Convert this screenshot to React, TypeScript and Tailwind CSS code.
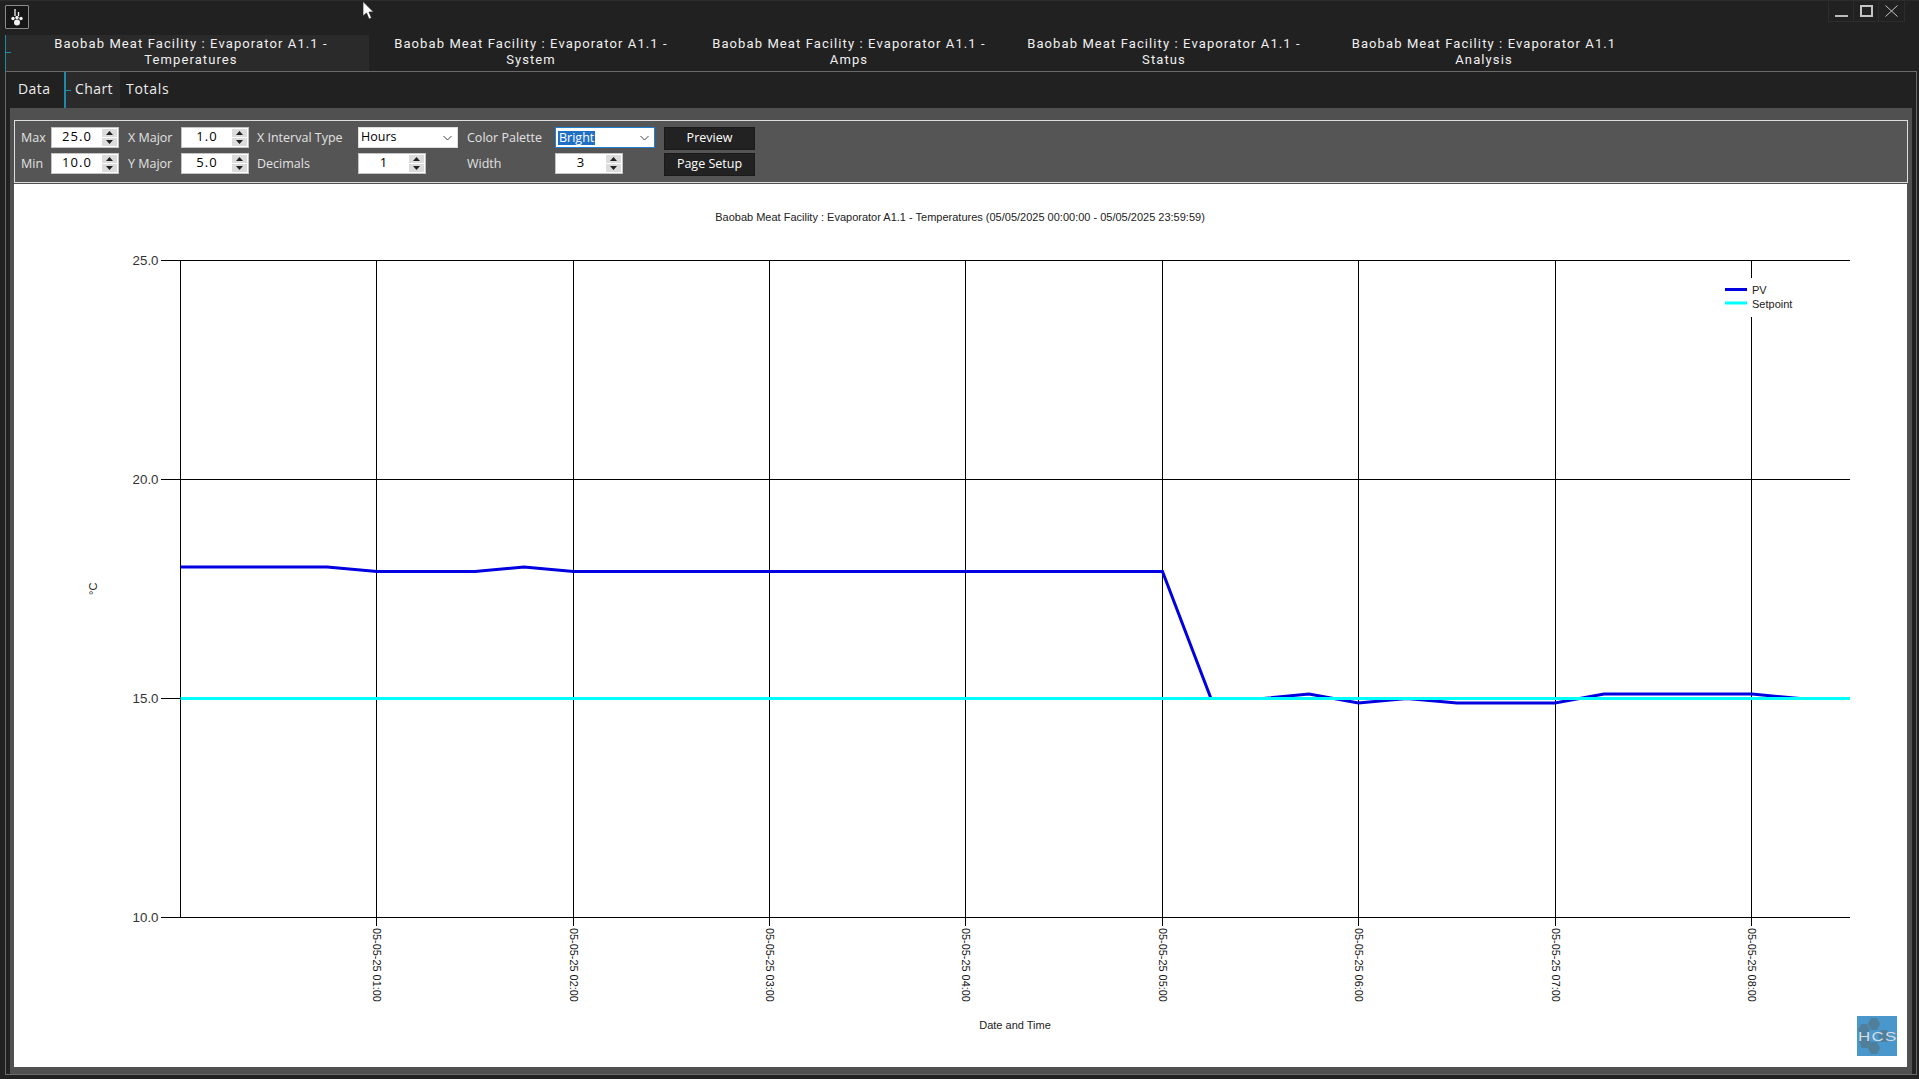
import React from "react";

const F = "font-['Open_Sans',sans-serif]";

function Arrow({ up }: { up: boolean }) {
  return (
    <svg width="7" height="4" viewBox="0 0 7 4" className="block">
      <path d={up ? "M3.5 0 L7 4 L0 4 Z" : "M0 0 L7 0 L3.5 4 Z"} fill="#222" />
    </svg>
  );
}

function Spin({ value, w = "w-[68px]" }: { value: string; w?: string }) {
  return (
    <div className={`${w} h-[21px] bg-white border border-[#c4c4c4] flex`}>
      <div className={`flex-1 text-center text-[13px] leading-[16px] text-black tracking-[1.1px] ${F}`}>{value}</div>
      <div className="w-[15px] mr-[1px] mt-[1px] mb-[1px] flex flex-col gap-[1px] bg-white">
        <div className="flex-1 bg-[#dcdcdc] flex items-center justify-center"><Arrow up /></div>
        <div className="flex-1 bg-[#dcdcdc] flex items-center justify-center"><Arrow up={false} /></div>
      </div>
    </div>
  );
}

function Select({ children, focus, w }: { children: React.ReactNode; focus?: boolean; w: string }) {
  return (
    <div className={`${w} h-[21px] bg-white border flex items-center pl-[2px] pr-[5px] justify-between ${focus ? "border-[#1f7fd0]" : "border-[#dddddd]"}`}>
      {children}
      <svg width="9" height="6" viewBox="0 0 9 6"><path d="M0.5 1 L4.5 5 L8.5 1" fill="none" stroke="#444" strokeWidth="1" /></svg>
    </div>
  );
}

function Label({ children, w }: { children: React.ReactNode; w: string }) {
  return <div className={`${w} text-[12.5px] leading-[21px] text-[#e2e2e2] ${F}`}>{children}</div>;
}

function Btn({ children }: { children: React.ReactNode }) {
  return (
    <div className={`w-[91px] h-[23px] bg-[#222222] border border-[#1a1a1a] text-white text-[12.5px] leading-[20px] text-center ${F}`}>{children}</div>
  );
}

function Tab({ l1, l2, w, active }: { l1: string; l2: string; w: string; active?: boolean }) {
  return (
    <div className={`${w} h-full relative text-center text-[13px] leading-[15.5px] tracking-[1.1px] pt-[1px] text-[#f0f0f0] font-['Roboto',sans-serif] ${active ? "bg-[#2a2a2a] border-l border-[#1e8aa8] pl-[7px]" : ""}`}>
      {active && <span className="absolute left-0 top-[17px] w-[5px] h-[1px] bg-[#1e8aa8]" />}
      <div>{l1}</div>
      <div>{l2}</div>
    </div>
  );
}

const xs = [376.5, 573.5, 769.5, 965.5, 1162.5, 1358.5, 1555.5, 1751.5];
const hours = ["01", "02", "03", "04", "05", "06", "07", "08"];
const ys: [number, string][] = [[260.5, "25.0"], [479.5, "20.0"], [698.5, "15.0"], [917.5, "10.0"]];
const yOf = (v: number) => 917.5 - (v - 10) * 43.8;
const pv: [number, number][] = [
  [180.5, 18], [327, 18], [377, 17.9], [475, 17.9], [524, 18], [573.5, 17.9], [1162.5, 17.9], [1211, 15], [1263, 15],
  [1309, 15.1], [1358.5, 14.9], [1407, 15], [1457, 14.9], [1555, 14.9], [1604, 15.1], [1752, 15.1], [1800, 15], [1850, 15],
];
const lf = "'Liberation Sans', sans-serif";

function Chart() {
  return (
    <svg viewBox="14 184 1893 883" width="1893" height="883" className="block">
      <rect x="14" y="184" width="1893" height="883" fill="#ffffff" />
      <text x="960" y="221" textAnchor="middle" fontFamily={lf} fontSize="11" fill="#222">
        Baobab Meat Facility : Evaporator A1.1 - Temperatures (05/05/2025 00:00:00 - 05/05/2025 23:59:59)
      </text>
      <line x1="180.5" y1="260" x2="180.5" y2="918" stroke="#000" strokeWidth="1" />
      {ys.map(([y, t]) => (
        <g key={t}>
          <line x1="161" y1={y} x2="1850" y2={y} stroke="#000" strokeWidth="1" />
          <text x="158.5" y={y + 4.5} textAnchor="end" fontFamily={lf} fontSize="13.3" fill="#333">{t}</text>
        </g>
      ))}
      {xs.map((x, i) => (
        <g key={x}>
          <line x1={x} y1="260" x2={x} y2="926" stroke="#000" strokeWidth="1" />
          <text transform={`translate(${x - 4} 928) rotate(90)`} fontFamily={lf} fontSize="10.9" fill="#111">
            {`05-05-25 ${hours[i]}:00`}
          </text>
        </g>
      ))}
      <polyline points={pv.map(([x, v]) => `${x},${yOf(v)}`).join(" ")} fill="none" stroke="#0000e0" strokeWidth="3" />
      <line x1="180.5" y1="698.5" x2="1850" y2="698.5" stroke="#00ffff" strokeWidth="3" />
      <rect x="1722" y="278" width="84" height="39" fill="#ffffff" />
      <line x1="1725" y1="289.5" x2="1747" y2="289.5" stroke="#0000e0" strokeWidth="3" />
      <line x1="1725" y1="303" x2="1747" y2="303" stroke="#00ffff" strokeWidth="3" />
      <text x="1752" y="294" fontFamily={lf} fontSize="11" fill="#222">PV</text>
      <text x="1752" y="308" fontFamily={lf} fontSize="11" fill="#222">Setpoint</text>
      <text transform="translate(97 595) rotate(-90)" fontFamily={lf} fontSize="11" fill="#222">°C</text>
      <text x="1015" y="1029" textAnchor="middle" fontFamily={lf} fontSize="11" fill="#222">Date and Time</text>
      <g>
        <rect x="1857" y="1016" width="40" height="40" fill="#4a97cb" />
        {[[1874, 1024], [1864, 1030], [1884, 1036], [1865, 1042], [1874, 1048]].map(([cx, cy]) => (
          <polygon
            key={`${cx}-${cy}`}
            points={`${cx - 6},${cy} ${cx - 3},${cy - 6} ${cx + 3},${cy - 6} ${cx + 6},${cy} ${cx + 3},${cy + 6} ${cx - 3},${cy + 6}`}
            fill="#4f7f9b"
          />
        ))}
        <text transform="translate(1858 1041) scale(1.3 1)" fontFamily={lf} fontSize="13" letterSpacing="1" fill="#d5dde2">HCS</text>
      </g>
    </svg>
  );
}

export default function App() {
  return (
    <div className="relative w-[1919px] h-[1079px] overflow-hidden bg-[#212121] flex flex-col">
      {/* Title bar */}
      <div className="h-[35px] shrink-0 flex justify-between border-t border-[#2c2c2c]">
        <div className="ml-[5px] mt-[4px] w-[24px] h-[24px] bg-[#161616] border border-[#8a8a8a] rounded-[1px] flex items-center justify-center">
          <svg width="14" height="18" viewBox="0 0 14 18">
            <path d="M5 1 V8 M8.5 4 V8" stroke="#f2f2f2" strokeWidth="1.3" fill="none" />
            <circle cx="3" cy="10.5" r="1.7" fill="#f2f2f2" />
            <circle cx="7" cy="9.5" r="1.7" fill="#f2f2f2" />
            <circle cx="11" cy="10.5" r="1.7" fill="#f2f2f2" />
            <circle cx="7" cy="14.5" r="3" fill="#f2f2f2" />
          </svg>
        </div>
        <div className="flex h-[21px] mr-[14px] border-b border-x border-[#2d2d2d]">
          <div className="w-[25px] flex items-end justify-center pb-[4px] border-r border-[#2d2d2d]"><div className="w-[13px] h-[2px] bg-[#bbb]" /></div>
          <div className="w-[25px] flex items-center justify-center border-r border-[#2d2d2d]"><div className="w-[13px] h-[12px] border-2 border-[#c4c4c4]" /></div>
          <div className="w-[25px] flex items-center justify-center">
            <svg width="13" height="12" viewBox="0 0 13 12"><path d="M0.5 0.5 L12.5 11.5 M12.5 0.5 L0.5 11.5" stroke="#c4c4c4" strokeWidth="1" /></svg>
          </div>
        </div>
      </div>

      {/* Top tabs */}
      <div className="h-[36px] shrink-0 flex pl-[5px]">
        <Tab active w="w-[364px]" l1="Baobab Meat Facility : Evaporator A1.1 -" l2="Temperatures" />
        <Tab w="w-[324px]" l1="Baobab Meat Facility : Evaporator A1.1 -" l2="System" />
        <Tab w="w-[312px]" l1="Baobab Meat Facility : Evaporator A1.1 -" l2="Amps" />
        <Tab w="w-[318px]" l1="Baobab Meat Facility : Evaporator A1.1 -" l2="Status" />
        <Tab w="w-[322px]" l1="Baobab Meat Facility : Evaporator A1.1" l2="Analysis" />
      </div>

      {/* Page */}
      <div className="flex-1 ml-[5px] mr-[2px] mb-[4px] border border-[#6a6a6a] flex flex-col min-h-0">
        <div className={`h-[36px] shrink-0 flex text-[14px] tracking-[0.4px] text-[#ececec] ${F}`}>
          <div className="w-[60px] pl-[12px] leading-[34px] border-r-2 border-[#1e8aa8]">Data</div>
          <div className="w-[54px] pl-[9px] leading-[34px] bg-[#2a2a2a] relative">
            <span className="absolute left-0 top-[18px] w-[5px] h-[1px] bg-[#1e8aa8]" />
            Chart
          </div>
          <div className="pl-[6px] leading-[34px] tracking-[0.7px]">Totals</div>
        </div>

        <div className="flex-1 ml-[4px] mr-[4px] bg-[#505050] pt-[12px] pr-[4px] pl-[4px] pb-[4px] flex flex-col min-h-0">
          <div className="h-[63px] shrink-0 border border-[#dcdcdc] bg-[#555555] pl-[6px] pt-[6px] flex gap-[9px]">
            <div className="w-[25px] flex flex-col gap-[5px]">
              <Label w="w-[30px]">Max</Label>
              <Label w="w-[30px]">Min</Label>
            </div>
            <div className="ml-[-4px] flex flex-col gap-[5px]">
              <Spin value="25.0" />
              <Spin value="10.0" />
            </div>
            <div className="w-[44px] flex flex-col gap-[5px]">
              <Label w="w-[50px]">X Major</Label>
              <Label w="w-[50px]">Y Major</Label>
            </div>
            <div className="flex flex-col gap-[5px]">
              <Spin value="1.0" />
              <Spin value="5.0" />
            </div>
            <div className="w-[92px] flex flex-col gap-[5px] -ml-[1px]">
              <Label w="w-[100px]">X Interval Type</Label>
              <Label w="w-[100px]">Decimals</Label>
            </div>
            <div className="flex flex-col gap-[5px]">
              <Select w="w-[100px]"><span className={`text-[12.5px] text-black ${F}`}>Hours</span></Select>
              <Spin value="1" />
            </div>
            <div className="w-[79px] flex flex-col gap-[5px]">
              <Label w="w-[90px]">Color Palette</Label>
              <Label w="w-[90px]">Width</Label>
            </div>
            <div className="flex flex-col gap-[5px]">
              <Select focus w="w-[100px]"><span className={`text-[12.5px] leading-[14px] bg-[#1f6fc4] text-white px-[1px] ${F}`}>Bright</span></Select>
              <Spin value="3" />
            </div>
            <div className="flex flex-col gap-[3px]">
              <Btn>Preview</Btn>
              <Btn>Page Setup</Btn>
            </div>
          </div>
          <div className="mt-[1px] flex-1 min-h-0 overflow-hidden">
            <Chart />
          </div>
        </div>
      </div>

      {/* Mouse pointer */}
      <svg className="absolute left-[362px] top-[1px]" width="13" height="19" viewBox="0 0 13 19">
        <path d="M1 0.5 V15 L4.5 12 L7 18 L9.5 17 L7 11 H11.5 Z" fill="#ffffff" stroke="#222" strokeWidth="0.7" />
      </svg>
    </div>
  );
}
